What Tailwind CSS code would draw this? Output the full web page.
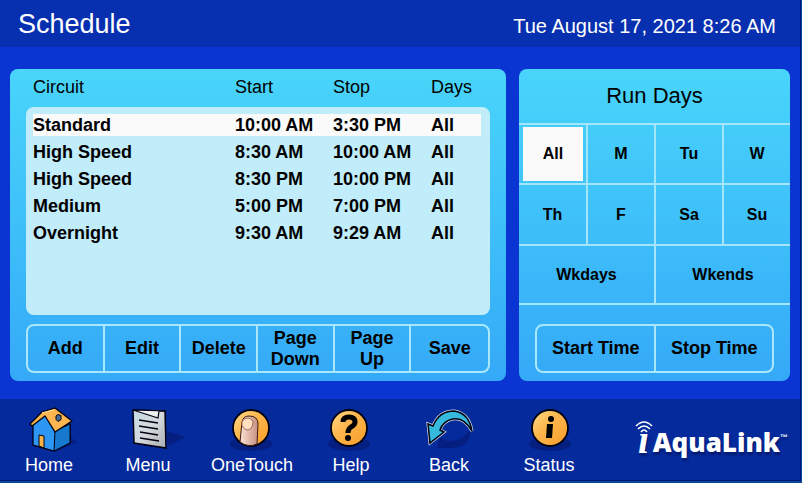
<!DOCTYPE html>
<html lang="en">
<head>
  <meta charset="UTF-8"/>
  <meta name="viewport" content="width=device-width, initial-scale=1.0"/>
  <title>Schedule</title>
  <script src="https://cdn.jsdelivr.net/npm/@tailwindcss/browser@4"></script>
</head>
<body class="bg-[#06499c] font-['Liberation_Sans',Arial,sans-serif] text-black">
  <div class="min-h-[481px] mr-px border-r border-[#03157a] bg-[#0a35d3] flex flex-col">

  <header class="h-[47px] shrink-0 bg-[#0730b0] text-white flex items-center justify-between pl-[18px] pr-6">
    <h1 class="text-[27px] leading-[46px]">Schedule</h1>
    <time class="text-[20px] leading-[24px] pt-1">Tue August 17, 2021 8:26 AM</time>
  </header>

  <main class="flex-1 grid grid-cols-[496fr_271fr] gap-[13px] px-[10px] pt-[22px] pb-[18px]">
    <section class="rounded-lg bg-linear-to-b from-[#49d5fa] to-[#35a9f7] px-4 pb-2 flex flex-col">
      <table class="flex-1 flex flex-col text-[18px] leading-[22px]">
        <thead class="block pl-[7px] pr-[9px] pt-[7px] pb-[9px]">
          <tr class="grid grid-cols-[202fr_98fr_98fr_50fr] text-left">
            <th class="font-normal">Circuit</th>
            <th class="font-normal">Start</th>
            <th class="font-normal">Stop</th>
            <th class="font-normal">Days</th>
          </tr>
        </thead>
        <tbody class="flex-1 flex flex-col gap-[5px] rounded-lg bg-[#c1ecfa] pl-[7px] pr-[9px] py-[7px] font-bold whitespace-nowrap">
          <tr class="grid grid-cols-[202fr_98fr_98fr_50fr] bg-[#fafafa]">
            <td>Standard</td><td>10:00 AM</td><td>3:30 PM</td><td>All</td>
          </tr>
          <tr class="grid grid-cols-[202fr_98fr_98fr_50fr]">
            <td>High Speed</td><td>8:30 AM</td><td>10:00 AM</td><td>All</td>
          </tr>
          <tr class="grid grid-cols-[202fr_98fr_98fr_50fr]">
            <td>High Speed</td><td>8:30 PM</td><td>10:00 PM</td><td>All</td>
          </tr>
          <tr class="grid grid-cols-[202fr_98fr_98fr_50fr]">
            <td>Medium</td><td>5:00 PM</td><td>7:00 PM</td><td>All</td>
          </tr>
          <tr class="grid grid-cols-[202fr_98fr_98fr_50fr]">
            <td>Overnight</td><td>9:30 AM</td><td>9:29 AM</td><td>All</td>
          </tr>
        </tbody>
      </table>
      <div class="mt-[9px] h-[49px] grid grid-cols-6 border-2 border-[#a9e7fc] rounded-lg divide-x-2 divide-[#a9e7fc] text-[18px] leading-[21px] font-bold">
        <button>Add</button>
        <button>Edit</button>
        <button>Delete</button>
        <button>Page<br>Down</button>
        <button>Page<br>Up</button>
        <button>Save</button>
      </div>
    </section>

    <section class="rounded-lg bg-linear-to-b from-[#49d5fa] to-[#35a9f7] flex flex-col">
      <h2 class="h-[54px] text-[22px] leading-[54px] text-center">Run Days</h2>
      <div class="h-[182px] grid grid-cols-[69fr_68fr_68fr_66fr] grid-rows-[60fr_61fr_57fr] border-y-2 border-[#a3e6fb] text-[16px] font-bold">
        <button class="border-r-2 border-b-2 border-[#a3e6fb] py-[2px] pl-1 pr-[3px]"><span class="bg-[#fafafa] h-full flex items-center justify-center">All</span></button>
        <button class="border-r-2 border-b-2 border-[#a3e6fb]">M</button>
        <button class="border-r-2 border-b-2 border-[#a3e6fb]">Tu</button>
        <button class="border-b-2 border-[#a3e6fb]">W</button>
        <button class="border-r-2 border-b-2 border-[#a3e6fb]">Th</button>
        <button class="border-r-2 border-b-2 border-[#a3e6fb]">F</button>
        <button class="border-r-2 border-b-2 border-[#a3e6fb]">Sa</button>
        <button class="border-b-2 border-[#a3e6fb]">Su</button>
        <button class="col-span-2 border-r-2 border-[#a3e6fb]">Wkdays</button>
        <button class="col-span-2">Wkends</button>
      </div>
      <div class="mt-auto mx-4 mb-2 h-[49px] grid grid-cols-[120fr_116fr] border-2 border-[#a9e7fc] rounded-lg divide-x-2 divide-[#a9e7fc] text-[18px] font-bold">
        <button>Start Time</button>
        <button>Stop Time</button>
      </div>
    </section>
  </main>

  <footer class="h-[82px] shrink-0 bg-[#052a9c] border-b border-[#021a70] text-white flex items-start justify-between pr-3">
    <nav class="flex text-[18px] leading-[24px]">
      <a href="#" class="w-[98px] pt-2 flex flex-col items-center">
        <svg class="w-14 h-[46px] shrink-0" viewBox="0 0 56 46">
          <defs>
            <linearGradient id="gold" x1="0" y1="0" x2="1" y2="1">
              <stop offset="0" stop-color="#ffdc8c"/><stop offset=".4" stop-color="#fdb850"/><stop offset="1" stop-color="#f99b26"/>
            </linearGradient>
            <linearGradient id="paper" x1="0" y1="0" x2="1" y2="1">
              <stop offset="0" stop-color="#c3dbe6"/><stop offset=".5" stop-color="#d5dadd"/><stop offset="1" stop-color="#a9abb0"/>
            </linearGradient>
            <linearGradient id="skin" x1="0" y1="0" x2="1" y2="0">
              <stop offset="0" stop-color="#fbe3d5"/><stop offset="1" stop-color="#c78f80"/>
            </linearGradient>
          </defs>
          <path d="M34 45 L56 35 L48 29 Z" fill="#041f80"/>
          <path d="M12 18 L24 6 L34 25 L49 17 L49 36 L33 44 L12 38 Z" fill="#2e97f6" stroke="#001" stroke-width="1.3" stroke-linejoin="round"/>
          <path d="M34 24 L49 17 L49 36 L33 44 Z" fill="#1778cf" stroke="#001" stroke-width="1" stroke-linejoin="round"/>
          <path d="M18 39 V28 L23 29 V41 Z" fill="#f9b44a" stroke="#001" stroke-width="1"/>
          <path d="M9 17 L21 5 L34 1 L51 14 L34 25 L24 9 L11 19 Z" fill="#fdb64f" stroke="#001" stroke-width="1.3" stroke-linejoin="round"/>
          <path d="M21 6 L33 3" stroke="#ffe09a" stroke-width="1.2"/>
          <path d="M35 9 l2 -1.5 l3 1 v4 l-3 2 l-2 -2 Z" fill="#456c98" stroke="#001" stroke-width="1"/>
        </svg>
        <span>Home</span>
      </a>
      <a href="#" class="w-[100px] pt-2 flex flex-col items-center">
        <svg class="w-14 h-[46px] shrink-0 overflow-visible" viewBox="0 0 56 46">
          <path d="M46 24 L66 30 L48 39 Z" fill="#041f80"/>
          <path d="M13 3 L45 4 L46 41 L14 36 Z" fill="url(#paper)" stroke="#001" stroke-width="1.5"/>
          <path d="M13 3 L38 11 L39 4 L45 4 Z" fill="#eef3f5" stroke="#001" stroke-width="1.2"/>
          <path d="M19 13 L38 16 M19 19 L38 22 M20 25 L38 28 M20 31 L39 34" stroke="#001" stroke-width="1.3"/>
        </svg>
        <span>Menu</span>
      </a>
      <a href="#" class="w-[108px] pt-2 flex flex-col items-center">
        <svg class="w-14 h-[46px] shrink-0" viewBox="0 0 56 46">
          <ellipse cx="27" cy="37" rx="21" ry="7" fill="#041f80"/>
          <circle cx="27" cy="21" r="18" fill="url(#gold)" stroke="#001" stroke-width="1.8"/>
          <path d="M16 35 L18 15 Q19 9 25 9 Q34 9 34 17 L33 37 Q24 41 16 35 Z" fill="url(#skin)" stroke="#3a1c14" stroke-width="1"/>
          <path d="M18 15 Q19 11 24 11 Q29 12 29 16 Q28 23 23 23 Q17 21 18 15 Z" fill="#ffdfbd" stroke="#9c6c5c" stroke-width="1"/>
        </svg>
        <span>OneTouch</span>
      </a>
      <a href="#" class="w-[90px] pt-2 flex flex-col items-center">
        <svg class="w-14 h-[46px] shrink-0" viewBox="0 0 56 46">
          <ellipse cx="26" cy="37" rx="21" ry="7" fill="#041f80"/>
          <circle cx="26" cy="21" r="18" fill="url(#gold)" stroke="#001" stroke-width="1.8"/>
          <path d="M20 15 Q20 10 26 10 Q32 10 32 15 Q32 18 28 20 Q25 22 25 26" fill="none" stroke="#000" stroke-width="5"/>
          <circle cx="25" cy="31" r="3"/>
        </svg>
        <span>Help</span>
      </a>
      <a href="#" class="w-[106px] pt-2 flex flex-col items-center">
        <svg class="w-14 h-[46px] shrink-0" viewBox="0 0 56 46">
          <path d="M16 41 L19 30 L25 34 Q42 35 50 21 Q50 43 25 41 Z" fill="#041f80"/>
          <path d="M7 17 L12 19 Q18 4 33 4 Q48 6 51 24 Q43 10 32 12 Q22 14 19 23 L23 25 L9 36 Z" fill="#35b9dd" stroke="#cddcea" stroke-width="3"/>
          <path d="M7 17 L12 19 Q18 4 33 4 Q48 6 51 24 Q43 10 32 12 Q22 14 19 23 L23 25 L9 36 Z" fill="#35b9dd" stroke="#001" stroke-width="1.5"/>
        </svg>
        <span>Back</span>
      </a>
      <a href="#" class="w-[94px] pt-2 flex flex-col items-center">
        <svg class="w-14 h-[46px] shrink-0" viewBox="0 0 56 46">
          <ellipse cx="29" cy="37" rx="21" ry="7" fill="#041f80"/>
          <circle cx="29" cy="21" r="18" fill="url(#gold)" stroke="#001" stroke-width="1.8"/>
          <circle cx="30" cy="12" r="3"/>
          <path d="M26 17 H32 L31 31 H25 Z"/>
        </svg>
        <span>Status</span>
      </a>
    </nav>
    <div class="pt-[22px] flex items-start font-bold text-shadow-[1px_3px_2px_#031c72]">
      <div class="flex flex-col items-center">
        <svg class="w-[18px] h-3" viewBox="0 0 18 12" fill="none" stroke="#fff" stroke-width="1.6">
          <path d="M1 5 Q9 -3 17 5 M3 8 Q9 2 15 8 M6 11 Q9 7 12 11"/>
        </svg>
        <span class="font-['Liberation_Serif',serif] italic text-[40px] leading-[14px]">ı</span>
      </div>
      <span class="font-['Open_Sans',sans-serif] font-extrabold text-[26px] leading-[30px] pt-[6px]">AquaLink</span>
      <span class="text-[8px] leading-[14px] pt-[10px]">™</span>
    </div>
  </footer>
  </div>
</body>
</html>
